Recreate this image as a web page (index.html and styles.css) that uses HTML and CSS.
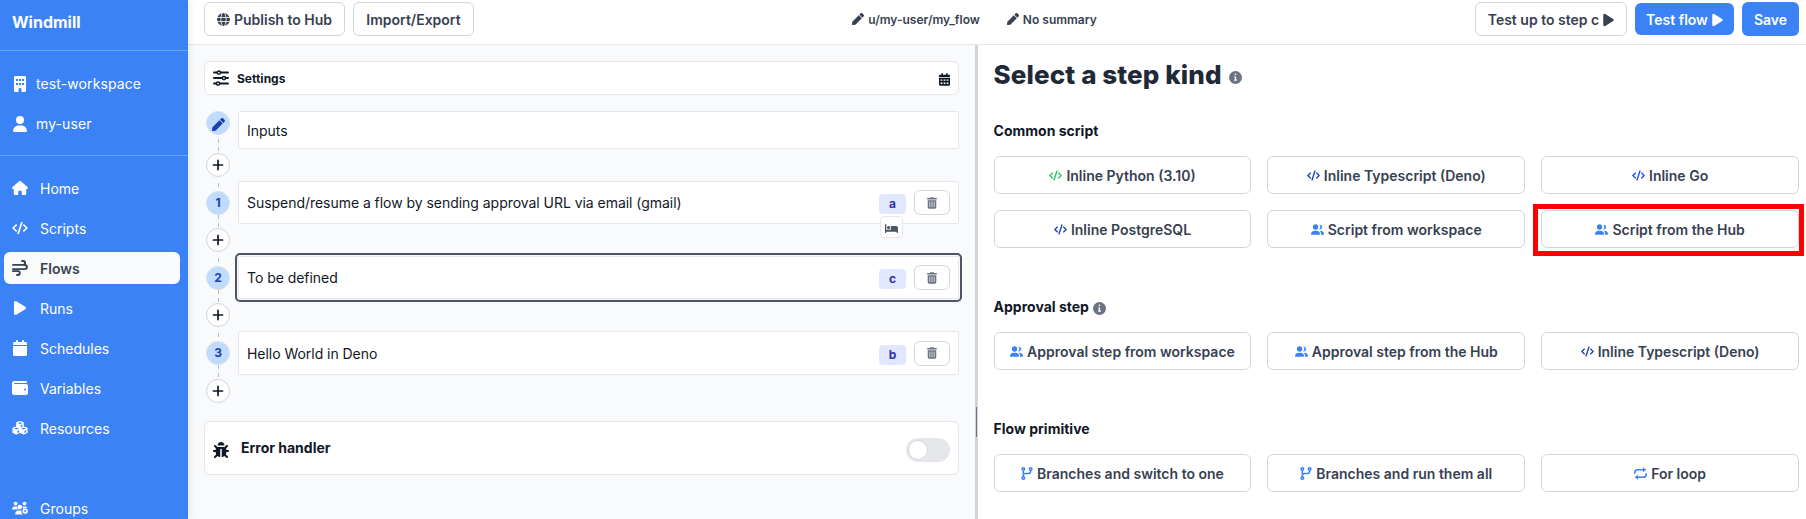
FILE: index.html
```html
<!DOCTYPE html>
<html lang="en">
<head>
<meta charset="utf-8">
<title>Windmill</title>
<link rel="stylesheet" href="styles.css">
</head>
<body>
<svg class="sprite" aria-hidden="true">
  <symbol id="building" viewBox="0 0 384 512"><path fill-rule="evenodd" d="M48 0H336c26 0 48 21 48 48V464c0 27-22 48-48 48H240V432c0-26-21-48-48-48s-48 22-48 48v80H48c-26 0-48-21-48-48V48C0 21 22 0 48 0zM64 96v64h64V96zm96 0v64h64V96zm96 0v64h64V96zM64 224v64h64v-64zm96 0v64h64v-64zm96 0v64h64v-64z"/></symbol>
  <symbol id="user" viewBox="0 0 448 512"><path d="M224 256A128 128 0 1 0 224 0a128 128 0 1 0 0 256zm-45.7 48C79.8 304 0 383.8 0 482.3C0 498.7 13.3 512 29.7 512H418.3c16.4 0 29.7-13.3 29.7-29.7C448 383.8 368.2 304 269.7 304H178.3z"/></symbol>
  <symbol id="home" viewBox="0 0 576 512"><path d="M576 256c0 18-15 32-32 32h-32v176c0 27-21 48-48 48h-80c-18 0-32-14-32-32v-96c0-18-14-32-32-32h-64c-18 0-32 14-32 32v96c0 18-14 32-32 32h-80c-27 0-48-21-48-48V288H32c-18 0-32-14-32-32 0-9 3-17 10-24L266 8c7-6 14-8 22-8s15 2 21 7l256 225c8 7 12 15 11 24z"/></symbol>
  <symbol id="code" viewBox="0 0 640 512"><path d="M392 36L248 476M168 138L42 256l126 118M472 138l126 118-126 118" fill="none" stroke="currentColor" stroke-width="66" stroke-linecap="round" stroke-linejoin="round"/></symbol>
  <symbol id="wind" viewBox="0 0 512 512"><path d="M320 32h36a60 60 0 0 1 0 124H32M384 160h28a66 66 0 0 1 0 132H32M160 480h28a62 62 0 0 0 0-124H32" fill="none" stroke="currentColor" stroke-width="62" stroke-linecap="round"/></symbol>
  <symbol id="play" viewBox="0 0 384 512"><path d="M73 39c-14.8-9.1-33.4-9.4-48.5-.9S0 62.6 0 80V432c0 17.4 9.4 33.4 24.5 41.9s33.7 8.1 48.5-.9L361 297c14.3-8.7 23-24.2 23-41s-8.7-32.2-23-41L73 39z"/></symbol>
  <symbol id="calendar" viewBox="0 0 448 512"><path d="M96 32V64H48C21.5 64 0 85.5 0 112v48H448V112c0-26.5-21.5-48-48-48H352V32c0-17.7-14.3-32-32-32s-32 14.3-32 32V64H160V32c0-17.7-14.3-32-32-32S96 14.3 96 32zM448 192H0V464c0 26.5 21.5 48 48 48H400c26.5 0 48-21.5 48-48V192z"/></symbol>
  <symbol id="calendar-grid" viewBox="0 0 448 512"><path fill-rule="evenodd" d="M96 0h64v64h128V0h64v64h48c27 0 48 21 48 48v48H0v-48c0-27 21-48 48-48h48zM0 192h448v272c0 27-21 48-48 48H48c-27 0-48-21-48-48zm64 60v56h72v-56zm124 0v56h72v-56zm124 0v56h72v-56zM64 380v56h72v-56zm124 0v56h72v-56zm124 0v56h72v-56z"/></symbol>
  <symbol id="wallet" viewBox="0 0 512 512"><path fill-rule="evenodd" d="M64 32h384c18 0 32 14 32 32s-14 32-32 32H80c-9 0-16 7-16 16s7 16 16 16h368c35 0 64 29 64 64v224c0 35-29 64-64 64H64c-35 0-64-29-64-64V96c0-35 29-64 64-64zm352 304a32 32 0 1 0 0-64 32 32 0 1 0 0 64z"/></symbol>
  <symbol id="cubes" viewBox="0 0 576 512"><path fill-rule="evenodd" d="M288 0l118 44c12 5 18 14 18 26v128l116 44c12 5 20 14 20 27v138c0 11-5 20-15 25l-113 56c-9 5-20 5-29 0l-115-57-115 57c-9 5-20 5-29 0L31 432c-10-5-15-14-15-25V269c0-13 8-22 20-27l116-44V70c0-12 6-21 18-26zm0 52l-80 30 80 32 80-32zm30 104v78l56-24v-78zM160 246l-84 32 84 34 84-34zm32 114v76l58-28v-78zM416 246l-84 32 84 34 84-34zm32 114v76l58-28v-78z"/></symbol>
  <symbol id="groups" viewBox="0 0 640 512"><circle cx="144" cy="80" r="78"/><circle cx="500" cy="80" r="78"/><circle cx="312" cy="214" r="92"/><path d="M0 300c0-62 46-108 106-108h44c22 0 42 5 58 14-8 48 8 88 36 114H20c-11 0-20-9-20-20zM416 206c14-9 34-14 58-14h56c50 0 92 34 104 78l-60-24-54 12-66 42zM128 486c0-78 58-134 134-134h100c6 0 12 0 18 2-10 62 10 118 56 158H154c-14 0-26-12-26-26z"/><path fill-rule="evenodd" d="M496 264h64l10 38 38-10 32 54-28 30 28 32-32 54-38-10-10 44h-64l-10-44-38 10-32-54 28-32-28-30 32-54 38 10zm32 72a40 40 0 1 0 0 80 40 40 0 1 0 0-80z"/></symbol>
  <symbol id="globe" viewBox="0 0 512 512"><path fill-rule="evenodd" d="M256 0a256 256 0 1 1 0 512 256 256 0 1 1 0-512z"/><path d="M0 176h512M0 336h512M208 0C134 150 134 362 208 512M304 0c74 150 74 362 0 512" fill="none" stroke="#fff" stroke-width="32"/></symbol>
  <symbol id="pen" viewBox="0 0 512 512"><path d="M290.74 93.24l128.02 128.02-277.99 277.99-114.14 12.6C11.35 513.54-1.56 500.62.14 485.34l12.7-114.22 277.9-277.88zm207.2-19.06l-60.11-60.11c-18.75-18.75-49.16-18.75-67.91 0l-56.55 56.55 128.02 128.02 56.55-56.55c18.75-18.76 18.75-49.16 0-67.91z"/></symbol>
  <symbol id="sliders" viewBox="0 0 512 512"><g fill="none" stroke="currentColor" stroke-width="60" stroke-linecap="round"><path d="M30 80h100M250 80h232M30 256h260M410 256h72M30 432h70M220 432h262"/><g stroke-width="48"><circle cx="190" cy="80" r="52"/><circle cx="350" cy="256" r="52"/><circle cx="160" cy="432" r="52"/></g></g></symbol>
  <symbol id="plus" viewBox="0 0 448 512"><path d="M224 62v388M30 256h388" fill="none" stroke="currentColor" stroke-width="72" stroke-linecap="round"/></symbol>
  <symbol id="trash" viewBox="0 0 448 512"><path fill-rule="evenodd" d="M136 18c5-11 16-18 28-18h120c12 0 23 7 28 18l8 14h96c18 0 32 14 32 32s-14 32-32 32H32C14 96 0 82 0 64s14-32 32-32h96zM32 128h384v320c0 35-29 64-64 64H96c-35 0-64-29-64-64zm96 64c-9 0-16 7-16 16v224c0 9 7 16 16 16s16-7 16-16V208c0-9-7-16-16-16zm96 0c-9 0-16 7-16 16v224c0 9 7 16 16 16s16-7 16-16V208c0-9-7-16-16-16zm96 0c-9 0-16 7-16 16v224c0 9 7 16 16 16s16-7 16-16V208c0-9-7-16-16-16z"/></symbol>
  <symbol id="bed" viewBox="0 0 640 512"><path d="M32 32c18 0 32 14 32 32v256h224V160c0-18 14-32 32-32h224c53 0 96 43 96 96v224c0 18-14 32-32 32s-32-14-32-32v-32H64v32c0 18-14 32-32 32S0 466 0 448V64c0-18 14-32 32-32zm144 96a80 80 0 1 1 0 160 80 80 0 1 1 0-160z"/></symbol>
  <symbol id="bug" viewBox="0 0 512 512"><path d="M511.988 288.9c-.478 17.43-15.217 31.1-32.653 31.1H424v16c0 21.864-4.882 42.584-13.6 61.145l60.228 60.228c12.496 12.497 12.496 32.758 0 45.255-12.498 12.497-32.759 12.496-45.256 0l-54.736-54.736C345.886 467.965 314.351 480 280 480V236c0-6.627-5.373-12-12-12h-24c-6.627 0-12 5.373-12 12v244c-34.351 0-65.886-12.035-90.636-32.108l-54.736 54.736c-12.498 12.497-32.759 12.496-45.256 0-12.496-12.497-12.496-32.758 0-45.255l60.228-60.228C92.882 378.584 88 357.864 88 336v-16H32.666C15.23 320 .491 306.33.013 288.9-.484 270.816 14.028 256 32 256h56v-58.745l-46.628-46.628c-12.496-12.497-12.496-32.758 0-45.255 12.498-12.497 32.758-12.497 45.256 0L141.255 160h229.489l54.627-54.627c12.498-12.497 32.758-12.497 45.256 0 12.496 12.497 12.496 32.758 0 45.255L424 197.255V256h56c17.972 0 32.484 14.816 31.988 32.9zM257 0c-61.856 0-112 50.144-112 112h224C369 50.144 318.856 0 257 0z"/></symbol>
  <symbol id="info" viewBox="0 0 512 512"><circle cx="256" cy="256" r="256"/><path fill="#fff" d="M256 96a34 34 0 1 1 0 68 34 34 0 1 1 0-68zM208 216h72v120h32v52H200v-52h32v-68h-24z"/></symbol>
  <symbol id="people" viewBox="0 0 640 512"><circle cx="224" cy="132" r="132"/><path d="M0 478c0-98 80-166 178-166h92c98 0 178 68 178 166 0 18-14 34-30 34H30c-16 0-30-16-30-34zM386 250a130 130 0 0 0 18-226c80-24 146 34 146 106 0 84-84 146-164 120zM432 318h46c90 0 162 74 162 164 0 16-14 30-30 30H490c14-74-8-146-58-194z"/></symbol>
  <symbol id="branch" viewBox="0 0 448 512"><g fill="none" stroke="currentColor" stroke-width="60"><circle cx="80" cy="80" r="50"/><circle cx="80" cy="432" r="50"/><circle cx="368" cy="80" r="50"/><path d="M80 130v252M368 130v26c0 70-40 104-100 104H176c-60 0-96 20-96 60"/></g></symbol>
  <symbol id="repeat" viewBox="0 0 512 512"><g fill="none" stroke="currentColor" stroke-width="64" stroke-linecap="round"><path d="M30 240v-10c0-74 54-122 122-122h218M482 272v10c0 74-54 122-122 122H142"/></g><path d="M352 14l128 94-128 94zM160 498L32 404l128-94z"/></symbol>
</svg>

<div class="app">
  <nav class="sidebar">
    <div class="brand">Windmill</div>
    <div class="account">
      <a class="nav-item"><svg class="icon"><use href="#building"/></svg>test-workspace</a>
      <a class="nav-item"><svg class="icon"><use href="#user"/></svg>my-user</a>
    </div>
    <div class="menu">
      <a class="nav-item"><svg class="icon"><use href="#home"/></svg>Home</a>
      <a class="nav-item"><svg class="icon"><use href="#code"/></svg>Scripts</a>
      <a class="nav-item active"><svg class="icon"><use href="#wind"/></svg>Flows</a>
      <a class="nav-item"><svg class="icon"><use href="#play"/></svg>Runs</a>
      <a class="nav-item"><svg class="icon"><use href="#calendar"/></svg>Schedules</a>
      <a class="nav-item"><svg class="icon"><use href="#wallet"/></svg>Variables</a>
      <a class="nav-item"><svg class="icon"><use href="#cubes"/></svg>Resources</a>
      <a class="nav-item groups"><svg class="icon"><use href="#groups"/></svg>Groups</a>
    </div>
  </nav>

  <main class="main">
    <header class="toolbar">
      <div class="tools">
        <button class="btn publish"><svg class="icon"><use href="#globe"/></svg>Publish to Hub</button>
        <button class="btn import">Import/Export</button>
      </div>
      <div class="meta">
        <span class="path"><svg class="icon"><use href="#pen"/></svg>u/my-user/my_flow</span>
        <span class="summary"><svg class="icon"><use href="#pen"/></svg>No summary</span>
      </div>
      <div class="tools">
        <button class="btn test-step">Test up to step c<svg class="icon play"><use href="#play"/></svg></button>
        <button class="btn primary test-flow">Test flow<svg class="icon play"><use href="#play"/></svg></button>
        <button class="btn primary save">Save</button>
      </div>
    </header>

    <div class="panes">
      <section class="flow">
        <div class="panel settings"><svg class="icon"><use href="#sliders"/></svg><span>Settings</span><svg class="icon schedule"><use href="#calendar-grid"/></svg></div>

        <div class="step inputs">
          <div class="rail"><span class="badge"><svg class="icon"><use href="#pen"/></svg></span><span class="add"><svg class="icon"><use href="#plus"/></svg></span></div>
          <div class="card"><span class="label">Inputs</span></div>
        </div>
        <div class="step">
          <div class="rail"><span class="badge">1</span><span class="add"><svg class="icon"><use href="#plus"/></svg></span></div>
          <div class="card"><span class="label">Suspend/resume a flow by sending approval URL via email (gmail)</span><span class="tag">a<span class="suspend"><svg class="icon"><use href="#bed"/></svg></span></span><button class="delete"><svg class="icon"><use href="#trash"/></svg></button></div>
        </div>
        <div class="step">
          <div class="rail"><span class="badge">2</span><span class="add"><svg class="icon"><use href="#plus"/></svg></span></div>
          <div class="card selected"><span class="label">To be defined</span><span class="tag">c</span><button class="delete"><svg class="icon"><use href="#trash"/></svg></button></div>
        </div>
        <div class="step last">
          <div class="rail"><span class="badge">3</span><span class="add"><svg class="icon"><use href="#plus"/></svg></span></div>
          <div class="card"><span class="label">Hello World in Deno</span><span class="tag">b</span><button class="delete"><svg class="icon"><use href="#trash"/></svg></button></div>
        </div>

        <div class="panel error"><svg class="icon"><use href="#bug"/></svg><span>Error handler</span><span class="toggle"></span></div>
      </section>
      <div class="splitter"></div>
      <section class="picker">
        <h1>Select a step kind<svg class="icon info"><use href="#info"/></svg></h1>
        <h2>Common script</h2>
        <div class="grid">
          <button class="kind"><svg class="icon code green"><use href="#code"/></svg>Inline Python (3.10)</button>
          <button class="kind"><svg class="icon code"><use href="#code"/></svg>Inline Typescript (Deno)</button>
          <button class="kind"><svg class="icon code bright"><use href="#code"/></svg>Inline Go</button>
          <button class="kind"><svg class="icon code"><use href="#code"/></svg>Inline PostgreSQL</button>
          <button class="kind"><svg class="icon people"><use href="#people"/></svg>Script from workspace</button>
          <button class="kind highlighted"><svg class="icon people"><use href="#people"/></svg>Script from the Hub</button>
        </div>
        <h2>Approval step<svg class="icon info"><use href="#info"/></svg></h2>
        <div class="grid">
          <button class="kind"><svg class="icon people"><use href="#people"/></svg>Approval step from workspace</button>
          <button class="kind"><svg class="icon people"><use href="#people"/></svg>Approval step from the Hub</button>
          <button class="kind"><svg class="icon code"><use href="#code"/></svg>Inline Typescript (Deno)</button>
        </div>
        <h2>Flow primitive</h2>
        <div class="grid">
          <button class="kind"><svg class="icon branch"><use href="#branch"/></svg>Branches and switch to one</button>
          <button class="kind"><svg class="icon branch"><use href="#branch"/></svg>Branches and run them all</button>
          <button class="kind"><svg class="icon repeat"><use href="#repeat"/></svg>For loop</button>
        </div>
      </section>
    </div>
  </main>
</div>
</body>
</html>
```
FILE: styles.css
```css
*, *::before, *::after { box-sizing: border-box; }
body { margin: 0; font-family: Inter, sans-serif; font-size: 14px; line-height: 20px; color: #111827; overflow: hidden; }
button { font: inherit; margin: 0; padding: 0; cursor: pointer; }
.sprite { display: none; }
.icon { display: block; flex: none; width: 16px; height: 16px; fill: currentColor; }

.app { display: flex; width: 1806px; height: 519px; overflow: hidden; }

.sidebar { position: relative; z-index: 1; flex: none; width: 188px; background: #3b82f6; color: #fff; box-shadow: 0 0 8px rgba(0, 0, 0, .12); }
.brand { height: 51px; padding: 12px; border-bottom: 1px solid #60a5fa; font-size: 16px; font-weight: 700; }
.account { display: flex; flex-direction: column; gap: 8px; height: 105px; padding: 17px 4px; border-bottom: 1px solid #60a5fa; letter-spacing: .1px; }
.menu { display: flex; flex-direction: column; gap: 8px; padding: 16px 8px 0 4px; }
.nav-item { display: flex; align-items: center; gap: 12px; flex: none; height: 32px; padding-left: 8px; border-radius: 6px; }
.menu .nav-item { padding-top: 2px; }
.menu .icon { margin-top: -2px; }
.account .nav-item { gap: 8px; }
.active { background: #f9fafb; color: #374151; font-weight: 600; }
.groups { margin-top: 40px; }
.groups .icon { height: 14px; }

.main { flex: 1; min-width: 0; }
.toolbar { display: flex; align-items: center; justify-content: space-between; height: 45px; padding: 0 7px 6px 16px; border-bottom: 1px solid #e5e7eb; background: #fff; color: #374151; }
.tools { display: flex; align-items: center; gap: 8px; }
.btn { display: flex; align-items: center; justify-content: center; gap: 4px; height: 34px; padding-top: 2px; border: 1px solid #d1d5db; border-radius: 6px; background: #fff; color: #374151; font-weight: 600; white-space: nowrap; }
.btn .icon { width: 13px; height: 13px; margin-top: -1px; }
.btn .play { width: 11px; height: 14px; }
.publish { width: 141px; }
.import { width: 121px; }
.test-step { width: 152px; }
.primary { border: 0; background: #3b82f6; color: #fff; }
.test-flow { width: 99px; height: 32px; }
.save { width: 57px; }
.meta { display: flex; gap: 27px; padding-top: 1px; font-size: 12px; font-weight: 600; }
.meta span { display: flex; align-items: center; gap: 4px; }
.meta .icon { width: 12px; height: 12px; margin-top: -2px; }

.panes { display: flex; height: 474px; }
.flow { flex: none; width: 787px; padding: 16px 16px 0; background: #f9fafb; }
.panel { display: flex; align-items: center; border: 1px solid #e5e7eb; border-radius: 6px; background: #fff; font-weight: 700; }
.settings { height: 34px; margin-bottom: 16px; padding: 0 8px; gap: 8px; font-size: 12px; }
.settings span { padding-top: 2px; }
.schedule { width: 11px; height: 13px; margin: 2px 0 0 auto; }
.step { display: flex; gap: 6px; height: 75px; }
.inputs { height: 70px; }
.rail { display: flex; flex-direction: column; align-items: center; justify-content: space-between; flex: none; width: 28px; padding: 10px 0 4px; background: repeating-linear-gradient(#b8bcc3 0 4px, transparent 4px 8px) 14px 2px / 1px 46px no-repeat; }
.inputs .rail { padding-top: 0; background-position-y: 4px; background-size: 1px 40px; }
.last .rail { height: 72px; padding-bottom: 0; }
.badge, .add { display: flex; align-items: center; justify-content: center; width: 24px; height: 24px; border-radius: 50%; }
.badge { border: 1px solid #dbe1ea; background: #bfdbfe; color: #1e40af; font-size: 12px; font-weight: 700; }
.badge .icon { width: 13px; height: 13px; margin-top: 2px; }
.add { border: 1px solid #d1d5db; background: #fff; }
.add .icon { width: 12px; height: 12px; }
.card { display: flex; align-items: center; flex: 1; height: 43px; padding: 0 8px; border: 1px solid #e5e7eb; border-radius: 2px; background: #fff; }
.inputs .card { height: 38px; }
.inputs .label { padding-top: 2px; }
.last .card { height: 44px; }
.last .label { padding-top: 1px; }
.selected { outline: 2px solid #4b5563; outline-offset: 1px; }
.label { flex: 1; letter-spacing: -.04px; }
.tag { position: relative; display: flex; align-items: center; justify-content: center; width: 27px; height: 20px; margin: 3px 8px 0 0; border-radius: 4px; background: #e0e7ff; color: #3730a3; font-size: 12px; font-weight: 700; }
.suspend { position: absolute; left: 1px; top: 22px; display: flex; align-items: center; justify-content: center; width: 23px; height: 22px; border: 1px solid #e5e7eb; border-radius: 4px; background: #fff; color: #4b5563; }
.suspend .icon { width: 13px; height: 11px; margin-top: 3px; }
.delete { display: flex; align-items: center; justify-content: center; width: 36px; height: 25px; border: 1px solid #d1d5db; border-radius: 6px; background: #fff; color: #6b7280; }
.delete .icon { width: 10px; height: 12px; }
.error { height: 54px; margin-top: 15px; padding: 0 8px; gap: 12px; }
.error .icon { margin-top: 4px; }
.toggle { width: 44px; height: 24px; margin: 4px 0 0 auto; padding: 2px; border-radius: 12px; background: #e5e7eb; }
.toggle::after { content: ""; display: block; width: 20px; height: 20px; border: 1px solid #d1d5db; border-radius: 50%; background: #fff; }

.splitter { display: flex; flex: none; align-items: center; justify-content: center; width: 3px; padding-top: 280px; background: #d1d5db; }
.splitter::before { content: ""; width: 1px; height: 30px; background: #6b7280; }

.picker { flex: 1; min-width: 0; padding: 14px 7px 0 15.6px; background: #fff; }
h1, h2 { display: flex; align-items: center; margin: 0; }
h1 { gap: 7px; height: 32px; font-size: 26px; font-weight: 800; letter-spacing: .1px; color: #1f2937; }
h2 { gap: 4px; height: 20px; margin: 49px 0 15px; font-size: 14px; font-weight: 650; }
h1 + h2 { margin-top: 30px; }
.info { width: 13px; height: 13px; margin-top: 4px; color: #6b7280; }
h2 .info { margin-top: 2px; }
.grid { display: grid; grid-template-columns: repeat(3, 1fr); gap: 16px; }
.kind { position: relative; display: flex; align-items: center; justify-content: center; gap: 4px; height: 38px; padding-top: 2px; border: 1px solid #d1d5db; border-radius: 6px; background: #fff; color: #374151; font-weight: 600; white-space: nowrap; }
.kind .icon { width: 13px; height: 11px; margin-top: -2px; color: #3b82f6; }
.kind .code { color: #1e40af; }
.kind .bright { color: #1d4ed8; }
.kind .green { color: #22c55e; }
.kind .branch { width: 12px; height: 13px; }
.kind .repeat { height: 13px; }
.highlighted::after { content: ""; position: absolute; left: -9px; top: -7px; width: 271px; height: 52px; border: 5px solid #f00; }
```
